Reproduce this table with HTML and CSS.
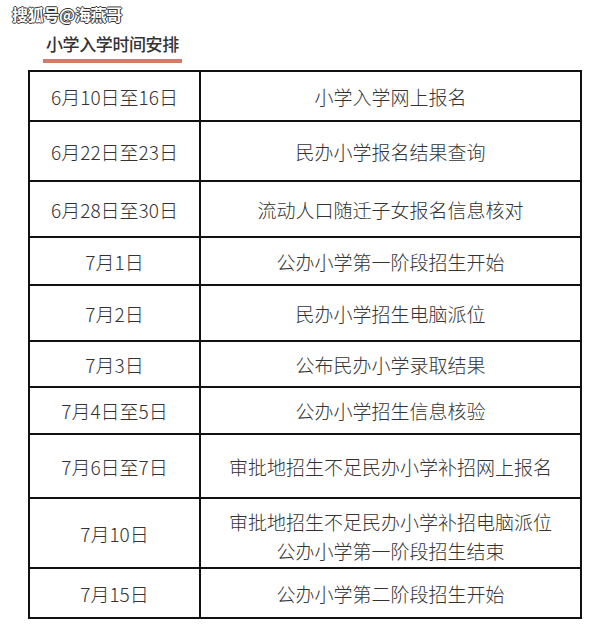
FILE: index.html
```html
<!DOCTYPE html>
<html lang="zh">
<head>
<meta charset="utf-8">
<link rel="stylesheet" href="styles.css">
</head>
<body>
<div class="page">
  <div class="watermark">搜狐号@海燕哥</div>
  <div class="title-block">
    <div class="title">小学入学时间安排</div>
    <div class="title-bar"></div>
  </div>
  <table class="schedule">
    <colgroup><col class="col-date"><col class="col-event"></colgroup>
    <tbody>
      <tr class="r1"><td>6月10日至16日</td><td>小学入学网上报名</td></tr>
      <tr class="r2"><td>6月22日至23日</td><td>民办小学报名结果查询</td></tr>
      <tr class="r3"><td>6月28日至30日</td><td>流动人口随迁子女报名信息核对</td></tr>
      <tr class="r4"><td>7月1日</td><td>公办小学第一阶段招生开始</td></tr>
      <tr class="r5"><td>7月2日</td><td>民办小学招生电脑派位</td></tr>
      <tr class="r6"><td>7月3日</td><td>公布民办小学录取结果</td></tr>
      <tr class="r7"><td>7月4日至5日</td><td>公办小学招生信息核验</td></tr>
      <tr class="r8"><td>7月6日至7日</td><td>审批地招生不足民办小学补招网上报名</td></tr>
      <tr class="r9"><td>7月10日</td><td>审批地招生不足民办小学补招电脑派位<br>公办小学第一阶段招生结束</td></tr>
      <tr class="r10"><td>7月15日</td><td>公办小学第二阶段招生开始</td></tr>
    </tbody>
  </table>
</div>
</body>
</html>
```
FILE: styles.css
```css
html, body {
  margin: 0;
  padding: 0;
  background: #ffffff;
}
body {
  font-family: "Noto Sans CJK SC", "Noto Sans", sans-serif;
  color: #333;
}
.page {
  width: 613px;
  height: 627px;
  overflow: hidden;
}
.watermark {
  padding: 4px 0 0 12px;
  height: 20px;
  font-size: 16px;
  line-height: 20px;
  font-weight: 700;
  color: #fff;
  letter-spacing: -0.3px;
  text-shadow: 1px 0 0 #333, -1px 0 0 #333, 0 1px 0 #333, 0 -1px 0 #333;
}
.title-block {
  margin: 8px 0 0 43px;
  width: 139px;
}
.title {
  font-size: 17px;
  line-height: 24px;
  font-weight: 500;
  color: #333;
  padding-left: 3px;
  letter-spacing: -0.4px;
}
.title-bar {
  margin-top: 3px;
  height: 4px;
  background: #d5796b;
}
.schedule {
  margin: 7px 0 0 28px;
  width: 554px;
  border-collapse: collapse;
  table-layout: fixed;
}
.col-date { width: 171px; }
.schedule td {
  border: 2px solid #111;
  text-align: center;
  vertical-align: middle;
  font-size: 19px;
  line-height: 29px;
  font-weight: 300;
  padding: 0;
  color: #333;
}
.r1 { height: 50px; }
.r2 { height: 60px; }
.r3 { height: 56px; }
.r4 { height: 48px; }
.r5 { height: 56px; }
.r6 { height: 46px; }
.r7 { height: 47px; }
.r8 { height: 64px; }
.r9 { height: 70px; }
.r10 { height: 50px; }
.r9 td:last-child { padding-top: 6px; }
```
